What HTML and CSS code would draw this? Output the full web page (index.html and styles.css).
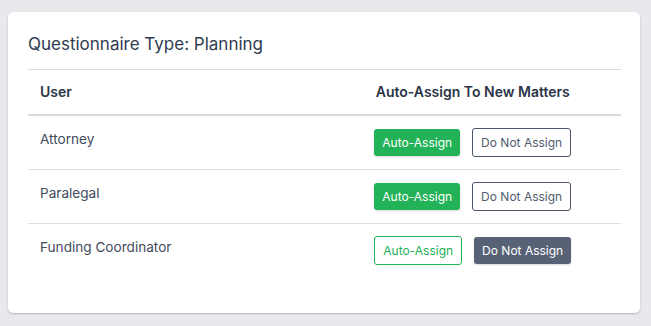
FILE: index.html
```html
<!DOCTYPE html>
<html lang="en">
<head>
<meta charset="utf-8">
<title>Questionnaire Type</title>
<link rel="stylesheet" href="styles.css">
</head>
<body>
<div class="card">
  <h2 class="title">Questionnaire Type: Planning</h2>
  <table class="tbl">
    <thead>
      <tr><th class="col-user">User</th><th class="col-assign">Auto-Assign To New Matters</th></tr>
    </thead>
    <tbody>
      <tr>
        <td class="cell-user">Attorney</td>
        <td class="cell-assign"><div class="btns"><button class="btn btn-green">Auto-Assign</button><button class="btn btn-outline-slate">Do Not Assign</button></div></td>
      </tr>
      <tr>
        <td class="cell-user">Paralegal</td>
        <td class="cell-assign"><div class="btns"><button class="btn btn-green">Auto-Assign</button><button class="btn btn-outline-slate">Do Not Assign</button></div></td>
      </tr>
      <tr>
        <td class="cell-user">Funding Coordinator</td>
        <td class="cell-assign"><div class="btns"><button class="btn btn-outline-green">Auto-Assign</button><button class="btn btn-slate">Do Not Assign</button></div></td>
      </tr>
    </tbody>
  </table>
</div>
</body>
</html>
```
FILE: styles.css
```css
* { box-sizing: border-box; }
html, body { margin: 0; padding: 0; }
body {
  background: #e8e9ec;
  font-family: Inter, "Noto Sans", sans-serif;
  padding: 12px 11px 14px 8px;
}
.card {
  background: #fff;
  border-radius: 5px;
  box-shadow: 0 1px 2px rgba(0,0,0,0.22);
  padding: 20px 19px 36px 20px;
}
.title {
  margin: 0 0 13px 0;
  font-size: 17px;
  line-height: 24px;
  font-weight: 400;
  color: #2f3b4f;
}
.tbl {
  width: 100%;
  border-collapse: collapse;
  table-layout: fixed;
  border-top: 1px solid #d7dadf;
}
.tbl th {
  font-size: 14px;
  line-height: 20px;
  font-weight: 600;
  color: #2a3547;
  padding: 12px 12px;
  border-bottom: 2px solid #d7dadf;
}
.col-user { text-align: left; width: 50%; }
.col-assign { text-align: center; }
.tbl td {
  font-size: 13.6px;
  line-height: 20px;
  color: #414b5c;
  padding: 13px 12px;
  vertical-align: top;
  border-bottom: 1px solid #dcdfe3;
}
.tbl tbody tr:last-child td { border-bottom: none; }
.btns {
  display: flex;
  justify-content: center;
  align-items: center;
  gap: 12px;
  height: 27px;
}
.btn {
  font-family: Inter, "Noto Sans", sans-serif;
  font-size: 12px;
  line-height: 16px;
  height: 27px;
  padding: 0 8px;
  border-radius: 3px;
  border: none;
  background: #fff;
  cursor: pointer;
  display: inline-flex;
  align-items: center;
}
.btn-green {
  background: #22b257;
  color: #fff;
  box-shadow: 0 1px 2px rgba(0,0,0,0.15);
}
.btn-slate {
  background: #586277;
  color: #fff;
  box-shadow: 0 1px 2px rgba(0,0,0,0.15);
}
.btn-outline-slate {
  height: 29px;
  border: 1px solid #4a5568;
  color: #525c6e;
}
.btn-outline-green {
  height: 29px;
  border: 1px solid #22b257;
  color: #22b257;
}
```
